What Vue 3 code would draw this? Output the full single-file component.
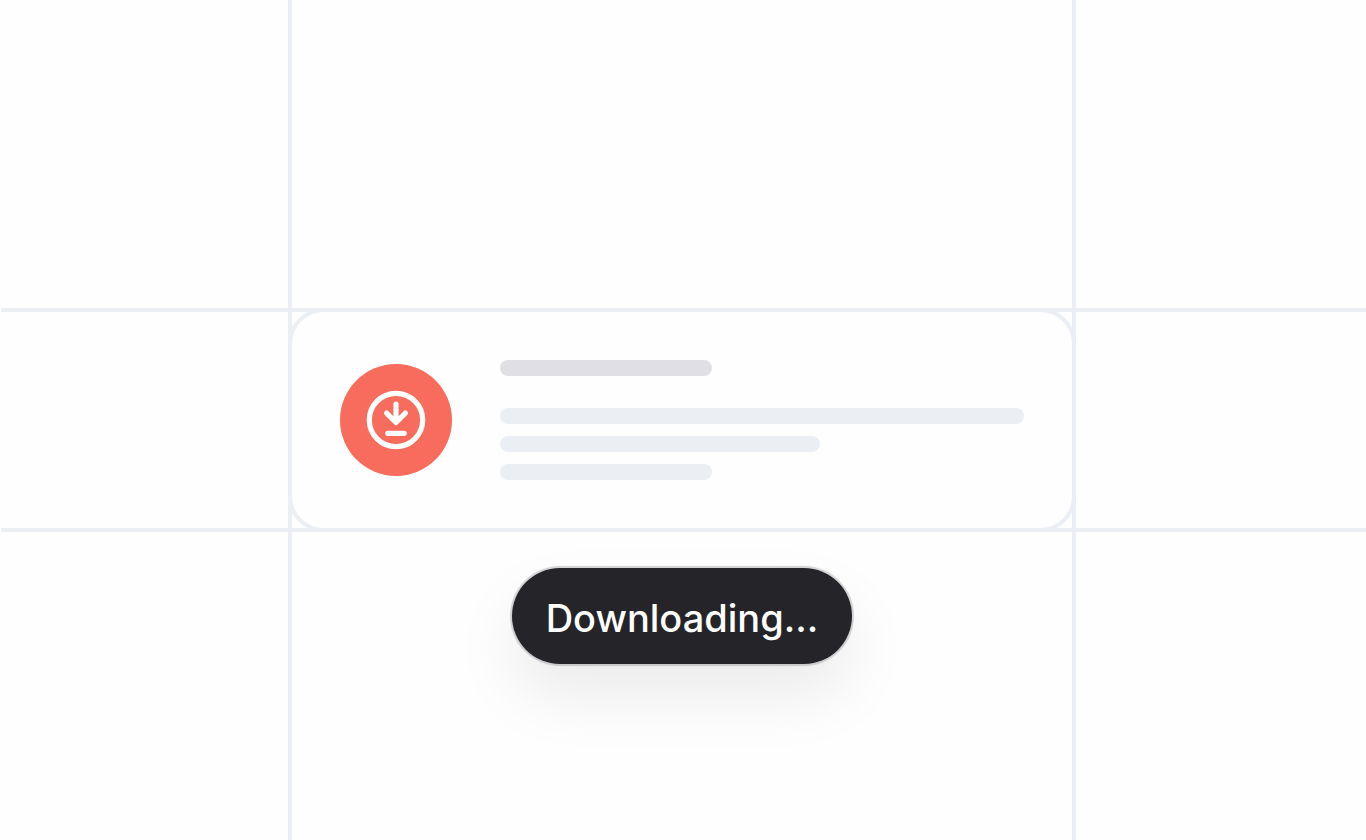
<script setup>
const status = 'Downloading...'
const lines = ['title', 'long', 'medium', 'short']
</script>

<template>
  <main class="stage">
    <div class="guide-columns"></div>
    <div class="guide-rows"></div>
    <section class="card">
      <div class="badge">
        <svg viewBox="0 0 64 64" aria-hidden="true">
          <circle cx="32" cy="32" r="26.7" />
          <path d="M32 16V34.3M22.6 25.1L32 34.5L41.4 25.1M23.8 45.3H40.2" />
        </svg>
      </div>
      <div class="lines">
        <div v-for="line in lines" :key="line" class="line" :class="line"></div>
      </div>
    </section>
    <div class="toast" role="status">{{ status }}</div>
  </main>
</template>

<style>
body {
  margin: 0;
  background: #fefefe;
}
</style>

<style scoped>
.stage {
  box-sizing: border-box;
  display: grid;
  grid-template-columns: 1fr minmax(0, 788px) 1fr;
  grid-template-rows: 1fr auto 1fr;
  min-height: 100vh;
  padding-right: 2px;
  overflow: hidden;
  font-family: Inter, "Liberation Sans", sans-serif;
}

.guide-columns {
  grid-column: 2;
  grid-row: 1 / -1;
  border: solid #ebeef3;
  border-width: 0 4px;
}

.guide-rows {
  grid-column: 1 / -1;
  grid-row: 2;
  margin: 0 -2px 0 1px;
  border: solid #ebeef3;
  border-width: 4px 0;
}

.card {
  grid-column: 2;
  grid-row: 2;
  display: flex;
  align-items: center;
  gap: 48px;
  padding: 48px;
  border: 4px solid #ebeef3;
  border-radius: 36px;
}

.badge {
  display: flex;
  flex: none;
  align-items: center;
  justify-content: center;
  width: 112px;
  height: 112px;
  border-radius: 50%;
  background: #f76c5c;
}

.badge svg {
  width: 64px;
  height: 64px;
  fill: none;
  stroke: #fff;
  stroke-width: 5.2;
  stroke-linecap: round;
  stroke-linejoin: round;
}

.lines {
  display: flex;
  flex: 1;
  flex-direction: column;
  gap: 12px;
}

.line {
  height: 16px;
  border-radius: 8px;
  background: #ebeff4;
}

.line.title {
  width: 212px;
  margin-bottom: 20px;
  background: #dfdfe5;
}

.line.long {
  max-width: 524px;
}

.line.medium {
  width: 320px;
}

.line.short {
  width: 212px;
}

.toast {
  grid-column: 2;
  grid-row: 3;
  align-self: start;
  justify-self: center;
  box-sizing: border-box;
  width: 340px;
  margin-top: 36px;
  padding-top: 4px;
  border-radius: 48px;
  background: #252429;
  box-shadow: 0 0 1px 2px rgba(0, 0, 0, 0.16), 0 32px 64px rgba(0, 0, 0, 0.08);
  color: #fff;
  font-size: 38px;
  font-weight: 500;
  line-height: 92px;
  text-align: center;
  white-space: nowrap;
}
</style>
